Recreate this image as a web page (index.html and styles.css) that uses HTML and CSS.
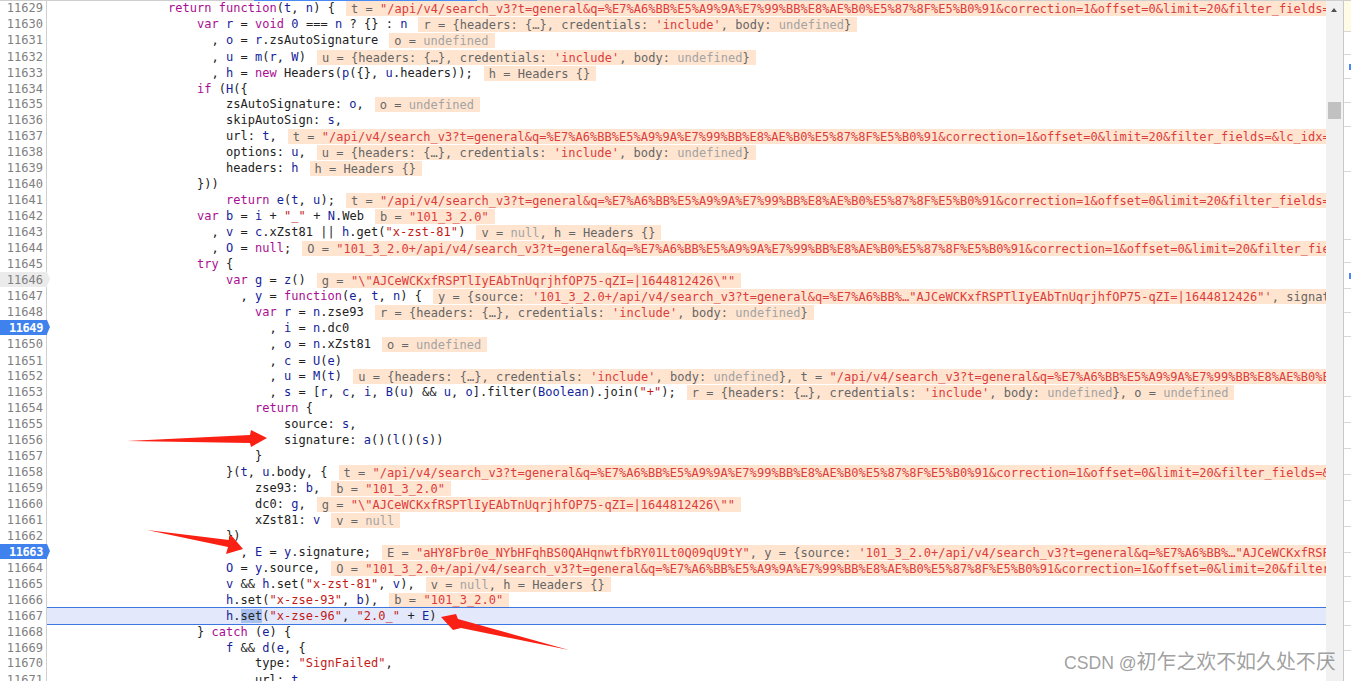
FILE: index.html
```html
<!DOCTYPE html>
<html lang="en">
<head>
<meta charset="utf-8">
<title>Sources</title>
<link rel="stylesheet" href="styles.css">
</head>
<body>
<div class="app">
<main class="editor">
<div class="row"><span class="ln">11629</span><pre class="code">                <i class="k">return</i> <i class="k">function</i>(<i class="v">t</i>, <i class="v">n</i>) {<span class="iv">t = <i class="s">"/api/v4/search_v3?t=general&amp;q=%E7%A6%BB%E5%A9%9A%E7%99%BB%E8%AE%B0%E5%87%8F%E5%B0%91&amp;correction=1&amp;offset=0&amp;limit=20&amp;filter_fields=&amp;lc_idx=0"</i></span></pre></div>
<div class="row"><span class="ln">11630</span><pre class="code">                    <i class="k">var</i> <i class="v">r</i> = <i class="k">void</i> <i class="v">0</i> === <i class="v">n</i> ? {} : <i class="v">n</i><span class="iv">r = {headers: {…}, credentials: <i class="s">'include'</i>, body: <i class="g">undefined</i>}</span></pre></div>
<div class="row"><span class="ln">11631</span><pre class="code">                      , <i class="v">o</i> = <i class="v">r</i>.zsAutoSignature<span class="iv">o = <i class="g">undefined</i></span></pre></div>
<div class="row low"><span class="ln">11632</span><pre class="code">                      , <i class="v">u</i> = <i class="v">m</i>(<i class="v">r</i>, <i class="v">W</i>)<span class="iv">u = {headers: {…}, credentials: <i class="s">'include'</i>, body: <i class="g">undefined</i>}</span></pre></div>
<div class="row low"><span class="ln">11633</span><pre class="code">                      , <i class="v">h</i> = <i class="k">new</i> Headers(<i class="v">p</i>({}, <i class="v">u</i>.headers));<span class="iv">h = Headers {}</span></pre></div>
<div class="row low"><span class="ln">11634</span><pre class="code">                    <i class="k">if</i> (<i class="v">H</i>({</pre></div>
<div class="row"><span class="ln">11635</span><pre class="code">                        zsAutoSignature: <i class="v">o</i>,<span class="iv">o = <i class="g">undefined</i></span></pre></div>
<div class="row"><span class="ln">11636</span><pre class="code">                        skipAutoSign: <i class="v">s</i>,</pre></div>
<div class="row"><span class="ln">11637</span><pre class="code">                        url: <i class="v">t</i>,<span class="iv">t = <i class="s">"/api/v4/search_v3?t=general&amp;q=%E7%A6%BB%E5%A9%9A%E7%99%BB%E8%AE%B0%E5%87%8F%E5%B0%91&amp;correction=1&amp;offset=0&amp;limit=20&amp;filter_fields=&amp;lc_idx=0"</i></span></pre></div>
<div class="row"><span class="ln">11638</span><pre class="code">                        options: <i class="v">u</i>,<span class="iv">u = {headers: {…}, credentials: <i class="s">'include'</i>, body: <i class="g">undefined</i>}</span></pre></div>
<div class="row"><span class="ln">11639</span><pre class="code">                        headers: <i class="v">h</i><span class="iv">h = Headers {}</span></pre></div>
<div class="row"><span class="ln">11640</span><pre class="code">                    }))</pre></div>
<div class="row"><span class="ln">11641</span><pre class="code">                        <i class="k">return</i> <i class="v">e</i>(<i class="v">t</i>, <i class="v">u</i>);<span class="iv">t = <i class="s">"/api/v4/search_v3?t=general&amp;q=%E7%A6%BB%E5%A9%9A%E7%99%BB%E8%AE%B0%E5%87%8F%E5%B0%91&amp;correction=1&amp;offset=0&amp;limit=20&amp;filter_fields=&amp;lc_idx=0"</i></span></pre></div>
<div class="row"><span class="ln">11642</span><pre class="code">                    <i class="k">var</i> <i class="v">b</i> = <i class="v">i</i> + <i class="s">"_"</i> + <i class="v">N</i>.Web<span class="iv">b = <i class="s">"101_3_2.0"</i></span></pre></div>
<div class="row"><span class="ln">11643</span><pre class="code">                      , <i class="v">v</i> = <i class="v">c</i>.xZst81 || <i class="v">h</i>.get(<i class="s">"x-zst-81"</i>)<span class="iv">v = <i class="g">null</i>, h = Headers {}</span></pre></div>
<div class="row"><span class="ln">11644</span><pre class="code">                      , <i class="v">O</i> = <i class="k">null</i>;<span class="iv">O = <i class="s">"101_3_2.0+/api/v4/search_v3?t=general&amp;q=%E7%A6%BB%E5%A9%9A%E7%99%BB%E8%AE%B0%E5%87%8F%E5%B0%91&amp;correction=1&amp;offset=0&amp;limit=20&amp;filter_fields=&amp;lc_idx=0"</i></span></pre></div>
<div class="row"><span class="ln">11645</span><pre class="code">                    <i class="k">try</i> {</pre></div>
<div class="row"><span class="ln mark-grey">11646</span><pre class="code">                        <i class="k">var</i> <i class="v">g</i> = <i class="v">z</i>()<span class="iv">g = <i class="s">"\"AJCeWCKxfRSPTlIyEAbTnUqrjhfOP75-qZI=|1644812426\""</i></span></pre></div>
<div class="row"><span class="ln">11647</span><pre class="code">                          , <i class="v">y</i> = <i class="k">function</i>(<i class="v">e</i>, <i class="v">t</i>, <i class="v">n</i>) {<span class="iv">y = {source: <i class="s">'101_3_2.0+/api/v4/search_v3?t=general&amp;q=%E7%A6%BB%…"AJCeWCKxfRSPTlIyEAbTnUqrjhfOP75-qZI=|1644812426"'</i>, signature: <i class="s">"aHY8Fbr0e"</i></span></pre></div>
<div class="row"><span class="ln">11648</span><pre class="code">                            <i class="k">var</i> <i class="v">r</i> = <i class="v">n</i>.zse93<span class="iv">r = {headers: {…}, credentials: <i class="s">'include'</i>, body: <i class="g">undefined</i>}</span></pre></div>
<div class="row"><span class="ln mark-blue">11649</span><pre class="code">                              , <i class="v">i</i> = <i class="v">n</i>.dc0</pre></div>
<div class="row"><span class="ln">11650</span><pre class="code">                              , <i class="v">o</i> = <i class="v">n</i>.xZst81<span class="iv">o = <i class="g">undefined</i></span></pre></div>
<div class="row low"><span class="ln">11651</span><pre class="code">                              , <i class="v">c</i> = <i class="v">U</i>(<i class="v">e</i>)</pre></div>
<div class="row"><span class="ln">11652</span><pre class="code">                              , <i class="v">u</i> = <i class="v">M</i>(<i class="v">t</i>)<span class="iv">u = {headers: {…}, credentials: <i class="s">'include'</i>, body: <i class="g">undefined</i>}, t = <i class="s">"/api/v4/search_v3?t=general&amp;q=%E7%A6%BB%E5%A9%9A%E7%99%BB%E8%AE%B0%E5%87%8F%E5%B0%91&amp;correction=1"</i></span></pre></div>
<div class="row"><span class="ln">11653</span><pre class="code">                              , <i class="v">s</i> = [<i class="v">r</i>, <i class="v">c</i>, <i class="v">i</i>, <i class="v">B</i>(<i class="v">u</i>) &amp;&amp; <i class="v">u</i>, <i class="v">o</i>].filter(<i class="v">Boolean</i>).join(<i class="s">"+"</i>);<span class="iv">r = {headers: {…}, credentials: <i class="s">'include'</i>, body: <i class="g">undefined</i>}, o = <i class="g">undefined</i></span></pre></div>
<div class="row"><span class="ln">11654</span><pre class="code">                            <i class="k">return</i> {</pre></div>
<div class="row"><span class="ln">11655</span><pre class="code">                                source: <i class="v">s</i>,</pre></div>
<div class="row"><span class="ln">11656</span><pre class="code">                                signature: <i class="v">a</i>()(<i class="v">l</i>()(<i class="v">s</i>))</pre></div>
<div class="row"><span class="ln">11657</span><pre class="code">                            }</pre></div>
<div class="row"><span class="ln">11658</span><pre class="code">                        }(<i class="v">t</i>, <i class="v">u</i>.body, {<span class="iv">t = <i class="s">"/api/v4/search_v3?t=general&amp;q=%E7%A6%BB%E5%A9%9A%E7%99%BB%E8%AE%B0%E5%87%8F%E5%B0%91&amp;correction=1&amp;offset=0&amp;limit=20&amp;filter_fields=&amp;lc_idx=0"</i></span></pre></div>
<div class="row"><span class="ln">11659</span><pre class="code">                            zse93: <i class="v">b</i>,<span class="iv">b = <i class="s">"101_3_2.0"</i></span></pre></div>
<div class="row"><span class="ln">11660</span><pre class="code">                            dc0: <i class="v">g</i>,<span class="iv">g = <i class="s">"\"AJCeWCKxfRSPTlIyEAbTnUqrjhfOP75-qZI=|1644812426\""</i></span></pre></div>
<div class="row"><span class="ln">11661</span><pre class="code">                            xZst81: <i class="v">v</i><span class="iv">v = <i class="g">null</i></span></pre></div>
<div class="row"><span class="ln">11662</span><pre class="code">                        })</pre></div>
<div class="row"><span class="ln mark-blue">11663</span><pre class="code">                          , <i class="v">E</i> = <i class="v">y</i>.signature;<span class="iv">E = <i class="s">"aHY8Fbr0e_NYbHFqhBS0QAHqnwtfbRY01Lt0Q09qU9tY"</i>, y = {source: <i class="s">'101_3_2.0+/api/v4/search_v3?t=general&amp;q=%E7%A6%BB%…"AJCeWCKxfRSPTlIyEAbTnUqrjhfOP75-qZI=|1644812426"'</i></span></pre></div>
<div class="row"><span class="ln">11664</span><pre class="code">                        <i class="v">O</i> = <i class="v">y</i>.source,<span class="iv">O = <i class="s">"101_3_2.0+/api/v4/search_v3?t=general&amp;q=%E7%A6%BB%E5%A9%9A%E7%99%BB%E8%AE%B0%E5%87%8F%E5%B0%91&amp;correction=1&amp;offset=0&amp;limit=20&amp;filter_fields=&amp;lc_idx=0"</i></span></pre></div>
<div class="row"><span class="ln">11665</span><pre class="code">                        <i class="v">v</i> &amp;&amp; <i class="v">h</i>.set(<i class="s">"x-zst-81"</i>, <i class="v">v</i>),<span class="iv">v = <i class="g">null</i>, h = Headers {}</span></pre></div>
<div class="row"><span class="ln">11666</span><pre class="code">                        <i class="v">h</i>.set(<i class="s">"x-zse-93"</i>, <i class="v">b</i>),<span class="iv iv-tight">b = <i class="s">"101_3_2.0"</i></span></pre></div>
<div class="row row-current"><span class="ln">11667</span><pre class="code">                        <i class="v">h</i>.<span class="sel">set</span>(<i class="s">"x-zse-96"</i>, <i class="s">"2.0_"</i> + <i class="v">E</i>)</pre></div>
<div class="row"><span class="ln">11668</span><pre class="code">                    } <i class="k">catch</i> (<i class="v">e</i>) {</pre></div>
<div class="row"><span class="ln">11669</span><pre class="code">                        <i class="v">f</i> &amp;&amp; <i class="v">d</i>(<i class="v">e</i>, {</pre></div>
<div class="row high"><span class="ln">11670</span><pre class="code">                            type: <i class="s">"SignFailed"</i>,</pre></div>
<div class="row"><span class="ln">11671</span><pre class="code">                            url: <i class="v">t</i></pre></div>
</main>
<div class="scrollbar">
<span class="scroll-up"></span>
<span class="scroll-thumb"></span>
</div>
<aside class="side">
<div class="cell c32 note"></div>
<div class="cell c23"></div>
<div class="cell c24 tick"></div>
<div class="cell c24"></div>
<div class="cell c24"></div>
<div class="cell c45"></div>
<div class="cell c68"></div>
<div class="cell c23"></div>
<div class="cell c26 tick"></div>
<div class="cell c24"></div>
<div class="cell c24"></div>
<div class="cell c60"></div>
<div class="cell c26"></div>
<div class="cell c26"></div>
<div class="cell c26"></div>
<div class="cell c26"></div>
<div class="cell c26"></div>
<div class="cell c26"></div>
<div class="cell c24"></div>
<div class="cell c25"></div>
<div class="cell c24"></div>
<div class="cell c25"></div>
</aside>
</div>
<div class="top-line"><span class="top-active"></span></div>
<svg class="arrows" viewBox="0 0 1351 681" aria-hidden="true">
<polygon points="127,441 250,435 251,430 267,438 251,447 250,443"/>
<polygon points="147,530 229,540 231,535 243,549 226,554 228,547"/>
<polygon points="441,617 456,614 458,619 569,650 461,628 453,630"/>
</svg>
<div class="watermark">CSDN @<span class="wm-cjk">初乍之欢不如久处不厌</span></div>
</body>
</html>
```
FILE: styles.css
```css
html, body {
  margin: 0;
  height: 100%;
  overflow: hidden;
  background: #fff;
}
.app {
  display: flex;
  height: 681px;
}
.editor {
  flex: 1;
  min-width: 0;
  overflow: hidden;
  font: 12px/16px "DejaVu Sans Mono", monospace;
  letter-spacing: 0.026px;
  color: #222;
  background: linear-gradient(to right, transparent 46px, #d0d0d0 46px, #d0d0d0 47px, transparent 47px);
}
.row {
  position: relative;
  display: flex;
  height: 16px;
}
.low {
  margin-top: 1px;
  margin-bottom: -1px;
}
.high {
  margin-top: -1px;
  margin-bottom: 1px;
}
.ln {
  position: relative;
  flex: 0 0 47px;
  box-sizing: border-box;
  padding-right: 4px;
  text-align: right;
  color: #808080;
}
.mark-blue, .mark-grey {
  height: 15px;
}
.mark-blue {
  background: #3f82ed;
  color: #fff;
  font-weight: bold;
  letter-spacing: -0.4px;
}
.mark-grey {
  background: #ebebeb;
}
.mark-blue::after, .mark-grey::after {
  content: "";
  position: absolute;
  left: 47px;
  top: 0;
  border-left: 3px solid #3f82ed;
  border-top: 7.5px solid transparent;
  border-bottom: 7.5px solid transparent;
}
.mark-grey::after {
  border-left-color: #ebebeb;
}
.code {
  flex: 1;
  min-width: 0;
  margin: 0;
  padding-left: 5px;
  font: inherit;
  white-space: pre;
  overflow: hidden;
}
.row-current {
  z-index: 1;
}
.row-current .code {
  background: #e3e9fb;
  box-shadow: 0 -1px #3b76e1, 0 1px #3b76e1;
  overflow: visible;
}
.sel {
  background: #a9c0ee;
}
.k { font-style: normal; color: #aa0d91; }
.v { font-style: normal; color: #14239a; }
.s { font-style: normal; color: #c41a16; }
.g { font-style: normal; color: #a3a3a3; }
.iv {
  display: inline-block;
  height: 15px;
  margin-top: 1px;
  margin-left: 11px;
  padding: 0 6px 0 5px;
  line-height: 17px;
  background: #ffe5d0;
  color: #666;
  vertical-align: top;
}
.iv-tight {
  line-height: 15px;
}
.iv .s { color: #dc3c3c; }
.scrollbar {
  position: relative;
  flex: 0 0 17px;
  background: #f1f1f1;
}
.scroll-up {
  position: absolute;
  left: 5px;
  top: 8px;
  border-left: 3.5px solid transparent;
  border-right: 3.5px solid transparent;
  border-bottom: 4px solid #505050;
}
.scroll-thumb {
  position: absolute;
  left: 2px;
  top: 102px;
  width: 13px;
  height: 17px;
  background: #c1c1c1;
}
.side {
  flex: 0 0 8px;
  box-sizing: border-box;
  border-left: 1px solid #c8c8c8;
  display: flex;
  flex-direction: column;
  overflow: hidden;
}
.cell {
  flex: none;
  box-sizing: border-box;
  border-bottom: 1px solid #d8d8d8;
}
.c23 { height: 23px; }
.c24 { height: 24px; }
.c25 { height: 25px; }
.c26 { height: 26px; }
.c32 { height: 32px; }
.c45 { height: 45px; }
.c60 { height: 60px; }
.c68 { height: 68px; }
.note {
  background: #fffbe6;
}
.tick {
  background: linear-gradient(#4a8af4, #4a8af4) right center / 2px 6px no-repeat;
}
.top-line {
  position: absolute;
  left: 0;
  top: 0;
  width: 100%;
  height: 1px;
  background: #cfcfcf;
}
.top-active {
  position: absolute;
  left: 254px;
  width: 223px;
  height: 1px;
  background: #4a8af4;
}
.arrows {
  position: absolute;
  left: 0;
  top: 0;
  z-index: 2;
  width: 1351px;
  height: 681px;
  fill: #fb2014;
  pointer-events: none;
}
.watermark {
  position: absolute;
  left: 1064px;
  top: 648px;
  z-index: 2;
  font: 17.6px/26px "Liberation Sans", "Noto Sans CJK SC", sans-serif;
  color: rgba(100, 100, 100, 0.62);
  white-space: nowrap;
}
.wm-cjk {
  font: 20px/26px "Noto Sans CJK SC", sans-serif;
  letter-spacing: -0.1px;
}
```
